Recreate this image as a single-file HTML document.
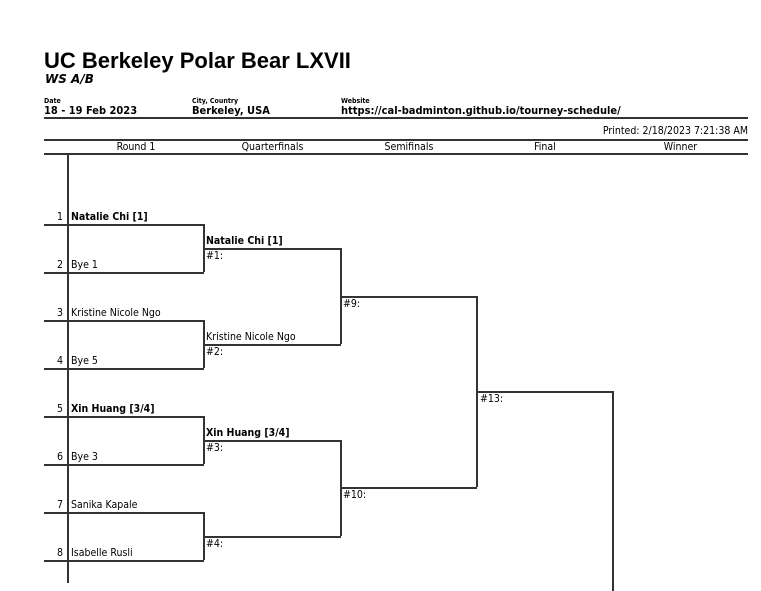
<!DOCTYPE html>
<html><head><meta charset="utf-8"><style>
body{margin:0;width:761px;height:575px;overflow:hidden;background:#fff;font-family:"DejaVu Sans Condensed","Liberation Sans",sans-serif;color:#000;position:relative}
.a{position:absolute;white-space:nowrap}
.h{position:absolute;height:0;border-top:2px solid #333}
.v{position:absolute;width:0;border-left:2px solid #333}
.t{font-size:10.5px;line-height:12px}
.b{font-weight:bold}
.n{position:absolute;width:20px;text-align:right;font-size:10.5px;line-height:12px}
</style></head><body>
<div class="a b" style="left:44px;top:48px;font-size:22px;font-family:'Liberation Sans',sans-serif">UC Berkeley Polar Bear LXVII</div>
<div class="a b" style="left:45px;top:72px;font-size:12px;font-style:italic;font-family:'DejaVu Sans','Liberation Sans',sans-serif">WS A/B</div>
<div class="a b" style="left:44px;top:97px;font-size:7px">Date</div>
<div class="a b" style="left:44px;top:104px;font-size:11px">18 - 19 Feb 2023</div>
<div class="a b" style="left:192px;top:97px;font-size:7px">City, Country</div>
<div class="a b" style="left:192px;top:104px;font-size:11px">Berkeley, USA</div>
<div class="a b" style="left:341px;top:97px;font-size:7px">Website</div>
<div class="a b" style="left:341px;top:104px;font-size:11px">https://cal-badminton.github.io/tourney-schedule/</div>
<div class="h" style="left:44px;width:704px;top:117px;border-top-width:2px"></div>
<div class="a t" style="right:13px;top:125px">Printed: 2/18/2023 7:21:38 AM</div>
<div class="h" style="left:44px;width:704px;top:139px"></div>
<div class="a t" style="left:68px;width:136px;text-align:center;top:141px">Round 1</div>
<div class="a t" style="left:204px;width:137px;text-align:center;top:141px">Quarterfinals</div>
<div class="a t" style="left:341px;width:136px;text-align:center;top:141px">Semifinals</div>
<div class="a t" style="left:477px;width:136px;text-align:center;top:141px">Final</div>
<div class="a t" style="left:613px;width:135px;text-align:center;top:141px">Winner</div>
<div class="h" style="left:44px;width:704px;top:153px"></div>
<div class="v" style="left:67px;top:153px;height:430px"></div>

<div class="h" style="left:44px;width:160px;top:224px"></div><div class="n" style="left:43px;top:211px">1</div><div class="a t b" style="left:71px;top:211px">Natalie Chi [1]</div>
<div class="h" style="left:44px;width:160px;top:272px"></div><div class="n" style="left:43px;top:259px">2</div><div class="a t" style="left:71px;top:259px">Bye 1</div>
<div class="h" style="left:44px;width:160px;top:320px"></div><div class="n" style="left:43px;top:307px">3</div><div class="a t" style="left:71px;top:307px">Kristine Nicole Ngo</div>
<div class="h" style="left:44px;width:160px;top:368px"></div><div class="n" style="left:43px;top:355px">4</div><div class="a t" style="left:71px;top:355px">Bye 5</div>
<div class="h" style="left:44px;width:160px;top:416px"></div><div class="n" style="left:43px;top:403px">5</div><div class="a t b" style="left:71px;top:403px">Xin Huang [3/4]</div>
<div class="h" style="left:44px;width:160px;top:464px"></div><div class="n" style="left:43px;top:451px">6</div><div class="a t" style="left:71px;top:451px">Bye 3</div>
<div class="h" style="left:44px;width:160px;top:512px"></div><div class="n" style="left:43px;top:499px">7</div><div class="a t" style="left:71px;top:499px">Sanika Kapale</div>
<div class="h" style="left:44px;width:160px;top:560px"></div><div class="n" style="left:43px;top:547px">8</div><div class="a t" style="left:71px;top:547px">Isabelle Rusli</div>
<div class="v" style="left:203px;top:224px;height:48px"></div>
<div class="v" style="left:203px;top:320px;height:48px"></div>
<div class="v" style="left:203px;top:416px;height:48px"></div>
<div class="v" style="left:203px;top:512px;height:48px"></div>

<div class="h" style="left:204px;width:137px;top:248px"></div><div class="a t b" style="left:206px;top:235px">Natalie Chi [1]</div><div class="a t" style="left:206px;top:250px">#1:</div>
<div class="h" style="left:204px;width:137px;top:344px"></div><div class="a t" style="left:206px;top:331px">Kristine Nicole Ngo</div><div class="a t" style="left:206px;top:346px">#2:</div>
<div class="h" style="left:204px;width:137px;top:440px"></div><div class="a t b" style="left:206px;top:427px">Xin Huang [3/4]</div><div class="a t" style="left:206px;top:442px">#3:</div>
<div class="h" style="left:204px;width:137px;top:536px"></div><div class="a t" style="left:206px;top:538px">#4:</div>
<div class="v" style="left:340px;top:248px;height:96px"></div>
<div class="v" style="left:340px;top:440px;height:96px"></div>

<div class="h" style="left:341px;width:136px;top:296px"></div><div class="a t" style="left:343px;top:298px">#9:</div>
<div class="h" style="left:341px;width:136px;top:487px"></div><div class="a t" style="left:343px;top:489px">#10:</div>
<div class="v" style="left:476px;top:296px;height:191px"></div>

<div class="h" style="left:477px;width:136px;top:391px"></div><div class="a t" style="left:480px;top:393px">#13:</div>
<div class="v" style="left:612px;top:391px;height:200px"></div>
</body></html>
